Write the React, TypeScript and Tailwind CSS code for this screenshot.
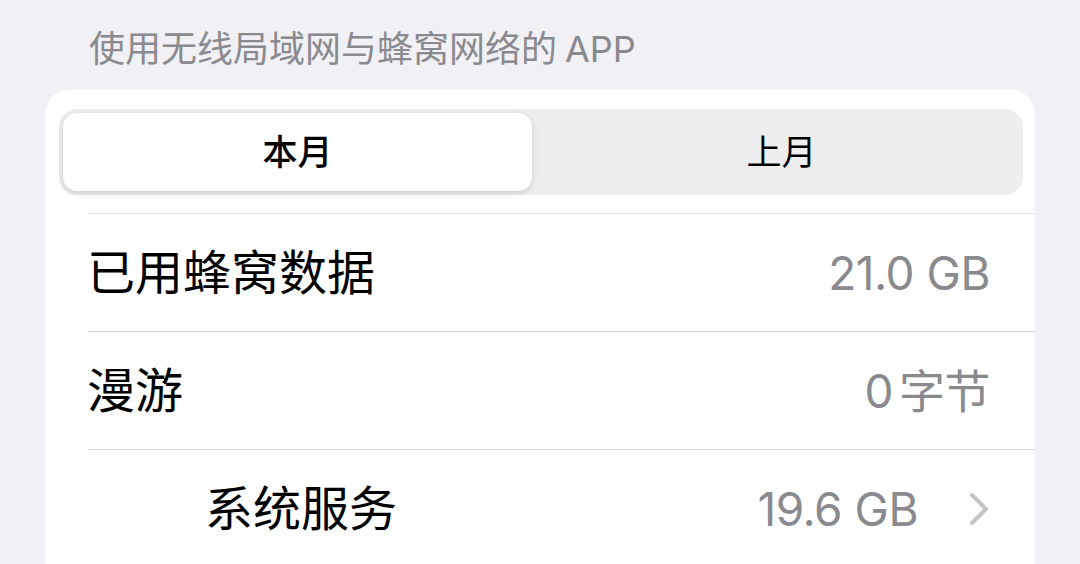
import React from "react";

const font = { fontFamily: "Inter, 'Noto Sans CJK SC', sans-serif" };

interface RowProps {
  label: string;
  value: React.ReactNode;
  indent?: boolean;
  chevron?: boolean;
  last?: boolean;
}

const Chevron = () => (
  <svg width="22" height="34" viewBox="0 0 22 34" className="ml-[50px] mr-[0px]">
    <path d="M4 3 L18 17 L4 31" fill="none" stroke="#c4c4c7" strokeWidth="4" strokeLinecap="round" strokeLinejoin="round" />
  </svg>
);

const Row: React.FC<RowProps> = ({ label, value, indent, chevron, last }) => {
  return (
    <div className={`h-[118px] flex items-center pr-[45px] ${last ? "" : "border-b border-[#d6d6da]"}`}>
      <span className={`text-[48px] leading-none text-black ${indent ? "ml-[117px]" : "ml-[-1px]"}`}>{label}</span>
      <div className="flex-1" />
      <span className="text-[46px] leading-none text-[#8a8a8e] tracking-[-0.5px]">{value}</span>
      {chevron && <Chevron />}
    </div>
  );
};

export default function App() {
  return (
    <div className="w-[1080px] h-[564px] overflow-hidden bg-[#f0f0f5]" style={font}>
      <div className="h-[90px] pt-[29px] pl-[89px]">
        <p className="text-[36px] leading-[40px] text-[#8a8a8e]">
          使用无线局域网与蜂窝网络的<span className="ml-[8px]">APP</span>
        </p>
      </div>

      <div className="mx-[45px] bg-white rounded-t-[24px] h-[500px] pt-[19px]">
        <div className="ml-[14px] w-[964px] h-[86px] rounded-[18px] bg-[#eeeef0] p-[4px] flex">
          <div className="w-[469px] h-full rounded-[14px] bg-white shadow-[0_2px_7px_rgba(0,0,0,0.14),0_0_1px_rgba(0,0,0,0.08)] flex items-center justify-center">
            <span className="text-[35px] font-medium text-black leading-none">本月</span>
          </div>
          <div className="flex-1 flex items-center justify-center pl-[12px]">
            <span className="text-[35px] text-black leading-none">上月</span>
          </div>
        </div>

        <div className="ml-[43px] mt-[18px] border-t border-[#e2e2e6]">
          <Row label="已用蜂窝数据" value="21.0 GB" />
          <Row label="漫游" value={<>0<span className="ml-[6px]">字节</span></>} />
          <Row label="系统服务" value="19.6 GB" indent chevron last />
        </div>
      </div>
    </div>
  );
}
